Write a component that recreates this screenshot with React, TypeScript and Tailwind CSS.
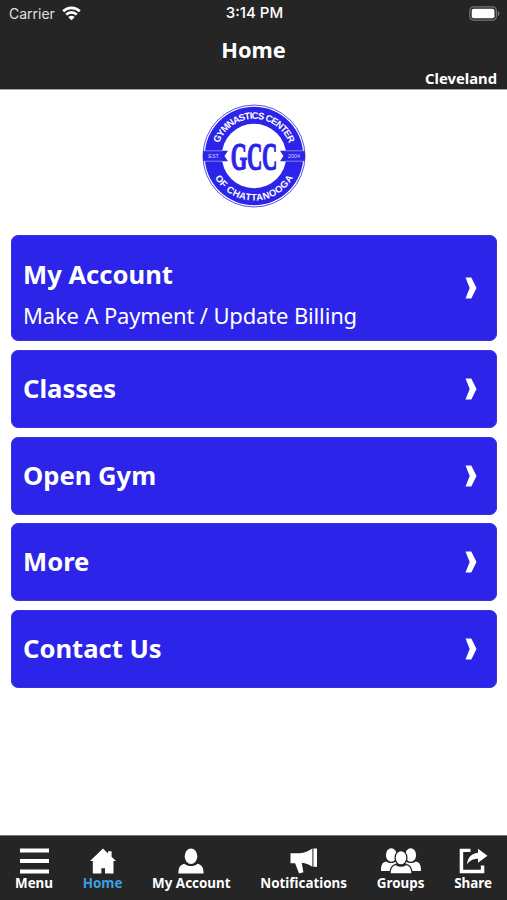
import type { ReactNode } from 'react'

interface MenuItem {
  title: string
  subtitle?: string
}

interface TabItem {
  label: string
  icon: ReactNode
  active?: boolean
}

const menuItems: MenuItem[] = [
  { title: 'My Account', subtitle: 'Make A Payment / Update Billing' },
  { title: 'Classes' },
  { title: 'Open Gym' },
  { title: 'More' },
  { title: 'Contact Us' },
]

function WifiIcon() {
  return (
    <svg width="19" height="15" viewBox="0 0 19 15" fill="none" stroke="#fff" strokeWidth="2.7">
      <path d="M1.2 5.2a11.8 11.8 0 0 1 16.6 0" />
      <path d="M4.2 8.600a7.600 7.600 0 0 1 10.600 0" />
      <path d="M9.500 14.200 6.300 11.200a4.500 4.500 0 0 1 6.400 0z" fill="#fff" stroke="none" />
    </svg>
  )
}

function BatteryIcon() {
  return (
    <svg width="31" height="15" viewBox="0 0 31 15">
      <rect x="0.8" y="0.8" width="26.6" height="13.4" rx="4" fill="none" stroke="#777" strokeWidth="1.2" />
      <rect x="2.7" y="2.7" width="22.8" height="9.6" rx="2" fill="#fff" />
      <path d="M28.800 5v5c1-.4 1.700-1.400 1.700-2.500S29.800 5.400 28.800 5z" fill="#777" />
    </svg>
  )
}

function Logo() {
  return (
    <svg width="104" height="104" viewBox="-52 -52 104 104">
      <defs>
        <path id="arc-top" d="M-37.200 0A37.200 37.200 0 0 1 37.200 0" />
        <path id="arc-bottom" d="M-44.600 0A44.600 44.600 0 0 0 44.600 0" />
      </defs>
      <circle r="51" fill="#fff" stroke="#2c24e8" strokeWidth="0.8" />
      <circle r="49.300" fill="#2c24e8" />
      <circle r="32.300" fill="#fff" />
      {/* ribbon tails */}
      <path d="M-51-5.200h25l-3.500 5.200 3.500 5.200h-25z" fill="#2c24e8" />
      <path d="M51-5.200h-25l3.500 5.200-3.500 5.200h25z" fill="#2c24e8" />
      <path d="M-50.500-5.200h18.700M-50.500 5.200h18.700M50.500-5.200H31.800M50.500 5.200H31.800" stroke="#d9d8fc" strokeWidth="0.5" />
      <g fill="#fff" fontFamily="Liberation Sans" fontWeight="700" fontSize="9.500" textAnchor="middle">
        <text>
          <textPath href="#arc-top" startOffset="50%" textLength="91">GYMNASTICS CENTER</textPath>
        </text>
        <text>
          <textPath href="#arc-bottom" startOffset="50%" textLength="95">OF CHATTANOOGA</textPath>
        </text>
      </g>
      <g fill="#d9d8fc" fontFamily="Liberation Sans" fontSize="5.400" textAnchor="middle">
        <text x="-40" y="1.900">EST.</text>
        <text x="40" y="1.900">2004</text>
      </g>
      <text
        transform="scale(.53 1)"
        y="13.600"
        textAnchor="middle"
        fontFamily="'Liberation Serif', serif"
        fontWeight="700"
        fontSize="40"
        letterSpacing="-0.500"
        fill="#2c24e8"
        stroke="#2c24e8"
        strokeWidth="1.200"
      >
        GCC
      </text>
    </svg>
  )
}

function Chevron() {
  return (
    <svg width="12" height="22" viewBox="0 0 12 22" fill="#fff">
      <path d="M0.500 0.500h5.800L11.500 11 6.300 21.500H0.500L4.700 11z" />
    </svg>
  )
}

const tabs: TabItem[] = [
  {
    label: 'Menu',
    icon: (
      <svg width="29" height="26" viewBox="0 0 29 26" fill="#fff">
        <path d="M0 .5h29v4H0zM0 11h29v4H0zM0 21.500h29v4H0z" />
      </svg>
    ),
  },
  {
    label: 'Home',
    active: true,
    icon: (
      <svg width="26" height="26" viewBox="0 0 26 26" fill="#fff">
        <path d="M13 .5 18 5.400V3.200h3.600v5.500L26 13h-2.500v12.500H15v-5.300h-3.600v5.300H2.800V13H0z" />
      </svg>
    ),
  },
  {
    label: 'My Account',
    icon: (
      <svg width="26" height="26" viewBox="0 0 26 26" fill="#fff">
        <ellipse cx="13" cy="8.200" rx="6.300" ry="7.800" />
        <path d="M.4 25.500c0-6 1.700-8.700 6-9.800 1.800 1.500 4 2.300 6.600 2.300s4.800-.8 6.600-2.300c4.300 1.100 6 3.800 6 9.800z" />
      </svg>
    ),
  },
  {
    label: 'Notifications',
    icon: (
      <svg width="28" height="26" viewBox="0 0 28 26" fill="#fff">
        <path d="M.5 5.200h9C14.600 4.800 18.500 3 22.400.5v18.300c-3.400-2.200-6.800-3.600-10.700-4l1.700 9.500-4.300 1.200-4-10.300H.5z" />
        <path d="M23.400.5H27v18.300h-3.600z" />
      </svg>
    ),
  },
  {
    label: 'Groups',
    icon: (
      <svg width="40" height="26" viewBox="0 0 40 26" fill="#fff">
        <ellipse cx="10.300" cy="7" rx="5.400" ry="6.700" />
        <ellipse cx="29.700" cy="7" rx="5.400" ry="6.700" />
        <path d="M0 23c0-6 1-8.700 5.200-9.600 3 2 6.800 2 9.600 0l3 9.600zM40 23c0-6-1-8.700-5.200-9.600-3 2-6.800 2-9.600 0l-3 9.600z" />
        <g stroke="#252525" strokeWidth="1.300">
          <path d="M9 26c0-6 1.500-8.600 5.800-9.600 3.200 2.200 7.200 2.200 10.400 0 4.300 1 5.800 3.600 5.800 9.600z" />
          <ellipse cx="20" cy="9.700" rx="5.900" ry="7.200" />
        </g>
      </svg>
    ),
  },
  {
    label: 'Share',
    icon: (
      <svg width="29" height="26" viewBox="0 0 29 26" fill="#fff">
        <path d="M11.500.800v3.300H4.200v17.700h17.600v-4.300h3.500V25.300H.7V.800z" />
        <path d="M19 .800 28.500 7.700 19 14.800v-4c-5.200.1-8.300 1.800-11 5.700.7-7 4.300-11 11-11.700z" />
      </svg>
    ),
  },
]

function MenuCard({ title, subtitle }: MenuItem) {
  return (
    <button
      className={`flex w-full items-center justify-between rounded-[7px] border border-[#3a32dc] bg-[#2c24e8] pr-[19px] pl-[11px] text-left text-white ${
        subtitle ? 'h-[106px]' : 'h-[78px]'
      }`}
    >
      <span className={`flex flex-col ${subtitle ? 'pt-[13px]' : ''}`}>
        <span className="text-[25.600px] leading-[40px] font-bold">{title}</span>
        {subtitle && <span className="text-[22px] leading-[40px] tracking-[-0.150px]">{subtitle}</span>}
      </span>
      <Chevron />
    </button>
  )
}

export default function App() {
  return (
    <div className="flex h-[900px] w-[507px] flex-col overflow-hidden bg-white font-['Noto_Sans',sans-serif]">
      <header className="flex h-[89px] flex-col bg-[#252525] text-white">
        <div className="grid h-[26px] grid-cols-3 items-center pr-[7px] pl-[9px] font-['Inter',sans-serif] text-[14px]">
          <div className="flex items-center gap-[7px] text-[#e0e0e0]">
            Carrier
            <WifiIcon />
          </div>
          <div className="text-center text-[15px] leading-[26px] font-medium whitespace-nowrap">3:14 PM</div>
          <div className="flex justify-end">
            <BatteryIcon />
          </div>
        </div>
        <h1 className="h-[42px] text-center text-[21.800px] leading-[48px] font-bold">Home</h1>
        <div className="pr-[10px] text-right text-[14.800px] leading-[21px] font-bold">Cleveland</div>
      </header>

      <main className="flex flex-1 flex-col border-t border-[#a5a5a5] pt-[14px] pr-[10px] pl-[11px]">
        <div className="flex justify-center">
          <Logo />
        </div>
        <div className="mt-[27px] flex flex-col gap-[8.800px]">
          {menuItems.map((item) => (
            <MenuCard key={item.title} {...item} />
          ))}
        </div>
      </main>

      <nav className="flex h-[65px] justify-between border-t border-[#777] bg-[#252525] px-[15px] pt-[12px] text-white">
        {tabs.map((tab) => (
          <div key={tab.label} className="flex flex-col items-center">
            {tab.icon}
            <span className={`text-[13.400px] leading-[18px] font-bold ${tab.active ? 'text-[#3f9fe0]' : ''}`}>
              {tab.label}
            </span>
          </div>
        ))}
      </nav>
    </div>
  )
}
